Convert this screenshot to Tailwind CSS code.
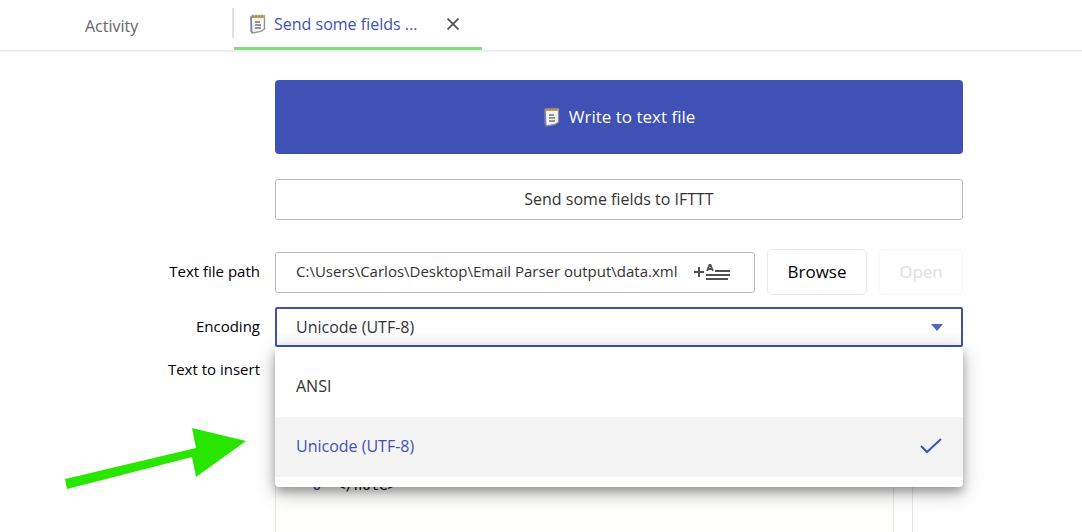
<!DOCTYPE html>
<html lang="en">
<head>
  <meta charset="UTF-8" />
  <title>Email Parser - Write to text file</title>
  <meta name="viewport" content="width=device-width, initial-scale=1.0" />
  <script src="https://cdn.jsdelivr.net/npm/@tailwindcss/browser@4"></script>
</head>
<body class="relative flex h-screen flex-col overflow-hidden bg-white font-['Open_Sans',sans-serif] text-base text-[#333]">
  <svg class="hidden">
    <symbol id="notepad" viewBox="0 0 16 20">
      <path d="M1 2.5 14.5 2v13l-3.500 2.500L2 19Z" fill="#f4f6f4" stroke="#8f9194" stroke-width="1.300" />
      <path d="M1 3v14l1.300 2" fill="none" stroke="#7779bd" stroke-width="1.300" />
      <path d="M1.500 1.500h13v2.500h-13Z" fill="#cda45c" />
      <path d="M3 .5v3M6 .5v3M9 .5v3M12 .5v3" stroke="#8d7659" />
      <path d="M5 8h5M5 11h6M5 14h6" stroke="#6d7774" stroke-width="1.300" />
    </symbol>
  </svg>

  <!-- Tabs -->
  <nav class="flex h-[52px] shrink-0 border-b-2 border-[#eee]">
    <a href="#" class="w-[232px] pl-[85px] pt-[14px] leading-6 text-[#666]">Activity</a>
    <div class="mt-2 mb-3 w-[2px] bg-[#e2e2e2]"></div>
    <div class="flex w-[248px] items-center border-b-[3px] border-[#82dc82] pl-4">
      <svg class="mr-2 h-5 w-4"><use href="#notepad" /></svg>
      <a href="#" class="w-[173px] text-[#3f51b5]">Send some fields ...</a>
      <button type="button" aria-label="Close tab">
        <svg class="size-3" viewBox="0 0 12 12" fill="none" stroke="#505050" stroke-width="1.700"><path d="m.5.5 11 11M11.500.5l-11 11" /></svg>
      </button>
    </div>
  </nav>

  <form class="mr-[119px] grid min-h-0 flex-1 grid-cols-[260px_1fr] grid-rows-[auto_auto_auto_auto_1fr] gap-x-[15px] pt-7">
    <button type="button" class="col-start-2 flex h-[74px] items-center justify-center gap-2 rounded bg-[#3f51b5] text-[17px] text-white">
      <svg class="h-5 w-[18px]"><use href="#notepad" /></svg>
      Write to text file
    </button>
    <input type="text" aria-label="Action name" value="Send some fields to IFTTT" class="col-start-2 mt-[25px] h-[41px] rounded-[3px] border border-[#bbb] pb-[2px] text-center" />

    <label for="path" class="mt-[29px] self-center pb-[2px] text-right text-[15px] text-black">Text file path</label>
    <div class="mt-[29px] flex items-center gap-3">
      <div class="flex h-[41px] flex-1 items-center rounded-[3px] border border-[#bbb] pr-6 pl-5">
        <input id="path" type="text" value="C:\Users\Carlos\Desktop\Email Parser output\data.xml" class="min-w-0 flex-1 pb-[2px] text-[15px] outline-none" />
        <button type="button" aria-label="Insert field" class="ml-2">
          <svg class="h-[18px] w-[37px]" viewBox="0 0 37 18" fill="none" stroke="#505050">
            <path d="M1 9h10M6 4v10" stroke-width="2" />
            <path d="m14 8 2.500-6h1L20 8M15 6h4" stroke-width="1.800" />
            <path d="M22 8h15M13 12h24M13 16h22" stroke-width="2" />
          </svg>
        </button>
      </div>
      <button type="button" class="h-[46px] w-[100px] rounded-[5px] border border-[#e8e8e8] text-[17px] text-black">Browse</button>
      <button type="button" disabled class="h-[46px] w-[84px] rounded-[5px] border border-[#f7f7f7] text-[17px] text-[#e2e2e2]">Open</button>
    </div>

    <label for="encoding" class="mt-3 self-center pb-[2px] text-right text-[15px] text-black">Encoding</label>
    <div class="relative mt-3">
      <select id="encoding" class="block h-10 w-full appearance-none rounded-[2px] border-2 border-[#3f51b5] bg-linear-to-b from-white from-60% to-[#f7f7f7] px-[19px] outline-none">
        <option>ANSI</option>
        <option selected>Unicode (UTF-8)</option>
      </select>
      <svg class="pointer-events-none absolute top-[17px] right-5 h-[7px] w-3" viewBox="0 0 12 7"><path d="M0 0h12L6 7Z" fill="#5265c0" /></svg>
      <ul role="listbox" aria-label="Encoding" class="absolute inset-x-0 top-full z-10 rounded-b bg-white py-[10px] shadow-[0_5px_8px_rgba(0,0,0,0.25),0_6px_20px_rgba(0,0,0,0.25)]">
        <li role="option" class="flex h-[60px] items-center px-[21px] pb-[2px]">ANSI</li>
        <li role="option" aria-selected="true" class="flex h-[60px] items-center justify-between bg-[#f4f4f4] px-[21px] pb-[2px] text-[#3f51b5]">
          Unicode (UTF-8)
          <svg class="h-4 w-[22px]" viewBox="0 0 22 16" fill="none" stroke="#3f51b5" stroke-width="2"><path d="m1 8 6 6L21 1" /></svg>
        </li>
      </ul>
    </div>

    <label for="content" class="mt-[11px] text-right text-[15px] leading-[22px] text-black">Text to insert</label>
    <div class="mt-3 mr-[50px] flex min-h-0 border-x border-[#e5e5e5]">
      <div class="w-[45px] bg-[#fefefc] pt-[116px] text-right font-['DejaVu_Sans_Mono',monospace] text-[14px] leading-5 text-[#1a237e]">6</div>
      <textarea id="content" class="flex-1 resize-none overflow-hidden border-r border-[#e5e5e5] bg-[#fefefc] pt-[116px] pl-4 font-['DejaVu_Sans_Mono',monospace] text-[14px] leading-5 text-black outline-none">&lt;/note&gt;</textarea>
      <div class="w-[18px]"></div>
    </div>
  </form>

  <!-- Pointer to the selected encoding -->
  <svg class="absolute top-[428px] left-[65px] h-[61px] w-[181px]" viewBox="0 0 181 61"><path d="m0 51 131-31-4-20 54 13-50 36-4-20L2 61Z" fill="#28e600" /></svg>
</body>
</html>
